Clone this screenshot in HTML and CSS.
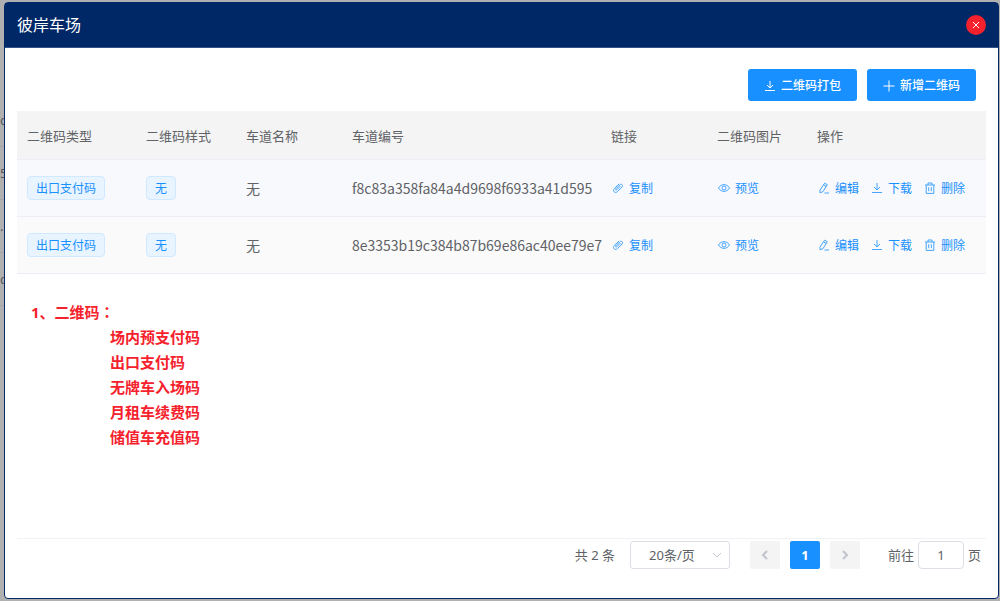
FILE: index.html
```html
<!DOCTYPE html>
<html lang="zh-CN">
<head>
<meta charset="utf-8">
<title>彼岸车场</title>
<link rel="stylesheet" href="styles.css">
</head>
<body>
<svg class="defs" aria-hidden="true">
  <symbol id="i-download" viewBox="0 0 12 12"><path d="M6 1v7M3 5l3 3 3-3M1 10.500h10"/></symbol>
  <symbol id="i-plus" viewBox="0 0 12 12"><path d="M6 .5v11M.5 6h11"/></symbol>
  <symbol id="i-clip" viewBox="0 0 12 12"><path d="M8.500 4 4.800 7.800c-.8.8-1.800-.2-1-1L7.800 2.800c1.600-1.500 3.800.5 2.200 2.200L5.400 9.700c-2.300 2.200-5.300-.8-3.100-3.100L7 1.900"/></symbol>
  <symbol id="i-eye" viewBox="0 0 12 12"><path d="M.5 6C3 1.500 9 1.500 11.500 6 9 10.500 3 10.500.5 6Z"/><circle cx="6" cy="6" r="2"/></symbol>
  <symbol id="i-edit" viewBox="0 0 12 12"><path d="M6.600 1.200 9.300 2.700 5 9.600 2 10.800 2 8ZM5.600 2.900l2.600 1.500M6.500 11H11"/></symbol>
  <symbol id="i-trash" viewBox="0 0 12 12"><path d="M1 3h10M4 3V1h4v2M2.200 3v8.400h7.600V3M4.700 5.200v4M7.300 5.200v4"/></symbol>
  <symbol id="i-close" viewBox="0 0 12 12"><path d="M3 3l6 6M9 3 3 9"/></symbol>
  <symbol id="i-left" viewBox="0 0 12 12"><path d="M8 2 4 6l4 4"/></symbol>
  <symbol id="i-right" viewBox="0 0 12 12"><path d="M4 2l4 4-4 4"/></symbol>
  <symbol id="i-down" viewBox="0 0 12 12"><path d="M2 4l4 4 4-4"/></symbol>
</svg>

<div class="backdrop" aria-hidden="true">
  <span>c</span><span>5</span><span>.</span><span>c</span>
</div>

<section class="dialog" role="dialog" aria-labelledby="dialog-title">
  <header class="dialog-header">
    <h1 id="dialog-title">彼岸车场</h1>
    <button class="close" type="button" aria-label="关闭"><svg class="icon"><use href="#i-close"/></svg></button>
  </header>
  <div class="dialog-body">
    <div class="toolbar">
      <button class="btn" type="button"><svg class="icon"><use href="#i-download"/></svg>二维码打包</button>
      <button class="btn" type="button"><svg class="icon"><use href="#i-plus"/></svg>新增二维码</button>
    </div>
    <table class="grid">
      <colgroup><col class="c-type"><col class="c-style"><col class="c-name"><col class="c-code"><col class="c-link"><col class="c-image"><col class="c-ops"></colgroup>
      <thead>
        <tr><th>二维码类型</th><th>二维码样式</th><th>车道名称</th><th>车道编号</th><th>链接</th><th>二维码图片</th><th>操作</th></tr>
      </thead>
      <tbody>
        <tr class="active">
          <td><span class="tag">出口支付码</span></td>
          <td><span class="tag">无</span></td>
          <td>无</td>
          <td>f8c83a358fa84a4d9698f6933a41d595</td>
          <td><button class="link" type="button"><svg class="icon"><use href="#i-clip"/></svg>复制</button></td>
          <td><button class="link" type="button"><svg class="icon"><use href="#i-eye"/></svg>预览</button></td>
          <td><div class="ops">
            <button class="link" type="button"><svg class="icon"><use href="#i-edit"/></svg>编辑</button>
            <button class="link" type="button"><svg class="icon"><use href="#i-download"/></svg>下载</button>
            <button class="link" type="button"><svg class="icon"><use href="#i-trash"/></svg>删除</button>
          </div></td>
        </tr>
        <tr>
          <td><span class="tag">出口支付码</span></td>
          <td><span class="tag">无</span></td>
          <td>无</td>
          <td>8e3353b19c384b87b69e86ac40ee79e7</td>
          <td><button class="link" type="button"><svg class="icon"><use href="#i-clip"/></svg>复制</button></td>
          <td><button class="link" type="button"><svg class="icon"><use href="#i-eye"/></svg>预览</button></td>
          <td><div class="ops">
            <button class="link" type="button"><svg class="icon"><use href="#i-edit"/></svg>编辑</button>
            <button class="link" type="button"><svg class="icon"><use href="#i-download"/></svg>下载</button>
            <button class="link" type="button"><svg class="icon"><use href="#i-trash"/></svg>删除</button>
          </div></td>
        </tr>
      </tbody>
    </table>
    <div class="note">
      <p>1、二维码<span class="colon" lang="zh-Hant">：</span></p>
      <ul>
        <li>场内预支付码</li>
        <li>出口支付码</li>
        <li>无牌车入场码</li>
        <li>月租车续费码</li>
        <li>储值车充值码</li>
      </ul>
    </div>
    <footer class="pager">
      <span class="total">共 2 条</span>
      <span class="size">
        <select aria-label="每页条数"><option>20条/页</option></select>
        <svg class="icon"><use href="#i-down"/></svg>
      </span>
      <nav class="pages" aria-label="分页">
        <button type="button" aria-label="上一页" disabled><svg class="icon"><use href="#i-left"/></svg></button>
        <button type="button" class="current">1</button>
        <button type="button" aria-label="下一页" disabled><svg class="icon"><use href="#i-right"/></svg></button>
      </nav>
      <span class="jump"><label for="page">前往</label><input id="page" type="text" value="1"><span>页</span></span>
    </footer>
  </div>
</section>
</body>
</html>
```
FILE: styles.css
```css
* { box-sizing: border-box; }

body {
  margin: 0;
  min-height: 100vh;
  display: flex;
  padding: 2px 1px 2px 4px;
  background: #b0b0b1;
  color: #606266;
  font: 13px/20px "Noto Sans", "Noto Sans CJK SC", sans-serif;
}

button, select, input { font: inherit; color: inherit; margin: 0; }
button { border: 0; padding: 0; background: none; cursor: pointer; }

.defs { position: absolute; width: 0; height: 0; }
.icon { width: 12px; height: 12px; flex: none; fill: none; stroke: currentColor; stroke-width: 1; }

.backdrop {
  position: absolute;
  left: 0;
  top: 94px;
  width: 20px;
  color: #55585e;
}
.backdrop span {
  display: flex;
  align-items: center;
  height: 53px;
  border-bottom: 1px solid #a3a5aa;
}

.dialog {
  position: relative;
  flex: 1;
  min-width: 0;
  display: flex;
  flex-direction: column;
  background: #fff;
  border: 1px solid #002766;
  border-radius: 4px;
}

.dialog-header {
  display: flex;
  align-items: center;
  justify-content: space-between;
  height: 45px;
  padding: 0 12px;
  background: #002766;
  border-bottom: 1px solid #33528a;
  color: #fff;
}
.dialog-header h1 { margin: 0; font-size: 16px; font-weight: 400; line-height: 24px; }

.close {
  display: flex;
  align-items: center;
  justify-content: center;
  width: 20px;
  height: 20px;
  border-radius: 50%;
  background: #f5222d;
  color: #fff;
}

.dialog-body { flex: 1; display: flex; flex-direction: column; padding: 21px 12px 29px; }

.toolbar { display: flex; justify-content: flex-end; gap: 10px; padding: 0 10px 10px 0; }
.btn {
  display: flex;
  align-items: center;
  gap: 5px;
  height: 32px;
  padding: 1px 16px 0;
  border-radius: 3px;
  background: #1890ff;
  color: #fff;
  font-size: 12px;
  font-weight: 500;
}

.grid { width: 100%; table-layout: fixed; border-collapse: separate; border-spacing: 0; }
.c-type { width: 119px; }
.c-style { width: 100px; }
.c-name { width: 106px; }
.c-code { width: 259px; }
.c-link { width: 106px; }
.c-image { width: 100px; }
.c-ops { width: 179px; }
.grid th, .grid td {
  height: 57px;
  padding: 0 0 0 10px;
  border-bottom: 1px solid #ebeef5;
  background: #fafafa;
  text-align: left;
  font-weight: 400;
  white-space: nowrap;
}
.grid th { height: 49px; padding-top: 2px; background: #f4f4f4; }
.grid td { font-family: "Noto Sans CJK SC", sans-serif; font-size: 14px; }
.grid .active td { background: #f8f9fc; }

.tag {
  display: inline-block;
  height: 24px;
  padding: 0 8px;
  border: 1px solid #d1e9ff;
  border-radius: 4px;
  background: #e8f4ff;
  color: #1890ff;
  font-size: 12px;
  line-height: 22px;
  vertical-align: middle;
}

.link { display: flex; align-items: center; gap: 5px; padding-left: 1px; color: #1890ff; font-size: 12px; }
.link .icon { opacity: .8; }
.ops { display: flex; gap: 11px; }

.note { padding: 25px 14px; color: #f5222d; font-size: 15px; font-weight: 700; line-height: 25px; }
.note p { margin: 0; }
.note .colon { font-family: "Noto Sans CJK TC", sans-serif; }
.note ul { margin: 0; padding: 0 0 0 79px; list-style: none; }

.pager {
  display: flex;
  align-items: center;
  justify-content: flex-end;
  margin-top: auto;
  padding: 2px 5px 0 0;
  border-top: 1px solid #f0f2f8;
}
.size { position: relative; margin: 0 20px 0 15px; }
.size select {
  display: block;
  width: 100px;
  height: 28px;
  padding: 0 32px 0 16px;
  border: 1px solid #dcdfe6;
  border-radius: 3px;
  background: #fff;
  appearance: none;
  text-align: center;
}
.size .icon { position: absolute; right: 7px; top: 8px; color: #c0c4cc; pointer-events: none; }
.pages { display: flex; gap: 10px; }
.pages button {
  display: flex;
  align-items: center;
  justify-content: center;
  width: 30px;
  height: 28px;
  border-radius: 2px;
  background: #f4f4f5;
  color: #c0c4cc;
}
.pages .icon { stroke-width: 2; }
.pages .current { background: #1890ff; color: #fff; font-weight: 700; }
.jump { display: flex; align-items: center; gap: 4px; margin-left: 28px; }
.jump input {
  width: 46px;
  height: 28px;
  padding: 0;
  border: 1px solid #dcdfe6;
  border-radius: 4px;
  background: #fff;
  text-align: center;
}
```
